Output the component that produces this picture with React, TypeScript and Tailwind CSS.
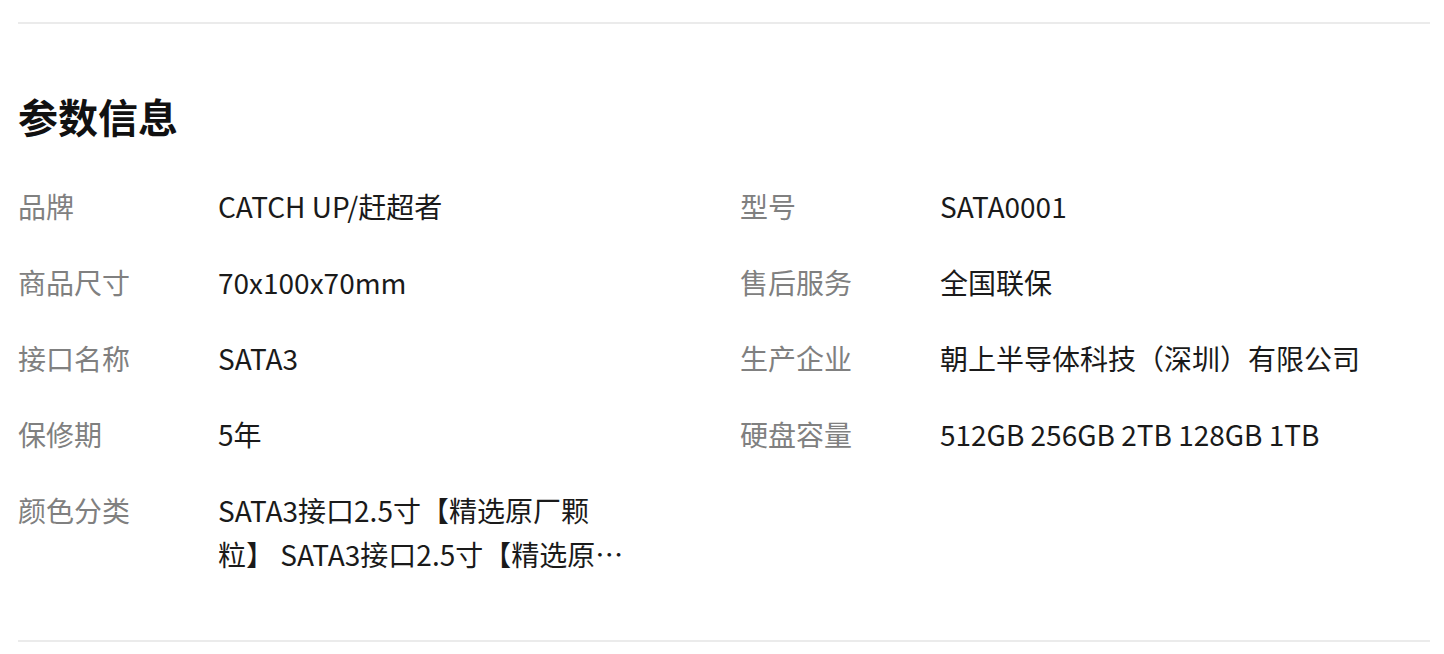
const params: [string, string][] = [
  ["品牌", "CATCH UP/赶超者"],
  ["型号", "SATA0001"],
  ["商品尺寸", "70x100x70mm"],
  ["售后服务", "全国联保"],
  ["接口名称", "SATA3"],
  ["生产企业", "朝上半导体科技（深圳）有限公司"],
  ["保修期", "5年"],
  ["硬盘容量", "512GB 256GB 2TB 128GB 1TB"],
  ["颜色分类", "SATA3接口2.5寸【精选原厂颗粒】 SATA3接口2.5寸【精选原厂颗粒】 SATA3接口2.5寸【精选原厂颗粒】"],
];

export default function App() {
  return (
    <div
      className="w-[1444px] h-[654px] bg-white overflow-hidden"
      style={{ fontFamily: '"Noto Sans CJK SC", "Noto Sans", sans-serif' }}
    >
      <div className="ml-[18px] w-[1412px] pt-[22px]">
        <div className="h-[2px] bg-[#ebebeb]" />
        <h2 className="mt-[64px] text-[40px] leading-[56px] font-bold text-[#111111]">参数信息</h2>
        <div className="mt-[40px] grid grid-cols-[722px_1fr] gap-y-[32px]">
          {params.map(([label, value], i) => (
            <div key={label} className={`flex text-[28px] leading-[44px] ${i % 2 === 0 ? "pr-[112px]" : ""}`}>
              <div className="w-[200px] shrink-0 text-[#808080]">{label}</div>
              <div className="flex-1 min-w-0 text-[#1a1a1a] line-clamp-2">{value}</div>
            </div>
          ))}
        </div>
        <div className="mt-[64px] h-[2px] bg-[#ebebeb]" />
      </div>
    </div>
  );
}
